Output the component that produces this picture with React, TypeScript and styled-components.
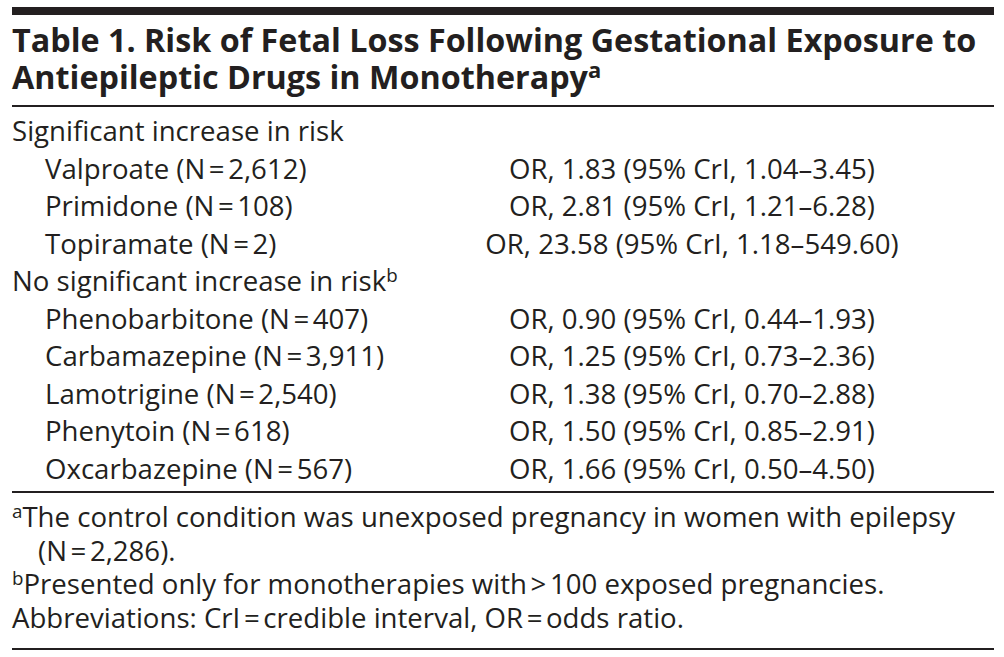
import React from "react";
import styled, { createGlobalStyle } from "styled-components";

const Global = createGlobalStyle`
  html, body { margin: 0; padding: 0; background: #ffffff; }
  body { font-family: "Open Sans", "Noto Sans", sans-serif; color: #231f20; }
`;

const Page = styled.div`
  width: 982px;
  padding: 7px 10px 0 12px;
`;

const Rule = styled.div<{ $h: number }>`
  height: ${(p) => p.$h}px;
  background: #231f20;
`;

const Title = styled.h1`
  margin: 0;
  padding: 5.5px 0 9.5px;
  font-family: "Open Sans", sans-serif;
  font-weight: 700;
  font-size: 32.3px;
  line-height: 37.5px;
  color: #231f20;
`;

const Sup = styled.sup`
  font-size: 0.68em;
  line-height: 0;
  vertical-align: 0.5em;
  font-weight: inherit;
`;

const Body = styled.div`
  display: grid;
  grid-template-columns: 382px 1fr;
  padding: 5.3px 0 3.7px;
  font-size: 27.6px;
  line-height: 37.5px;
`;

const Label = styled.div<{ $indent?: boolean }>`
  padding-left: ${(p) => (p.$indent ? 33 : 0)}px;
  white-space: nowrap;
`;

const Value = styled.div`
  text-align: center;
  white-space: nowrap;
  padding-right: 4px;
`;

const Notes = styled.div`
  padding: 7px 0 14px;
  font-size: 27.6px;
  line-height: 33.6px;
`;

const Note = styled.p<{ $hang?: boolean }>`
  margin: 0;
  padding-left: ${(p) => (p.$hang ? 26 : 0)}px;
  text-indent: ${(p) => (p.$hang ? -26 : 0)}px;
`;

const T = "\u202F";

type Row =
  | { kind: "head"; label: string; sup?: string }
  | { kind: "drug"; label: string; value: string };

const rows: Row[] = [
  { kind: "head", label: "Significant increase in risk" },
  { kind: "drug", label: `Valproate (N${T}=${T}2,612)`, value: "OR, 1.83 (95% CrI, 1.04–3.45)" },
  { kind: "drug", label: `Primidone (N${T}=${T}108)`, value: "OR, 2.81 (95% CrI, 1.21–6.28)" },
  { kind: "drug", label: `Topiramate (N${T}=${T}2)`, value: "OR, 23.58 (95% CrI, 1.18–549.60)" },
  { kind: "head", label: "No significant increase in risk", sup: "b" },
  { kind: "drug", label: `Phenobarbitone (N${T}=${T}407)`, value: "OR, 0.90 (95% CrI, 0.44–1.93)" },
  { kind: "drug", label: `Carbamazepine (N${T}=${T}3,911)`, value: "OR, 1.25 (95% CrI, 0.73–2.36)" },
  { kind: "drug", label: `Lamotrigine (N${T}=${T}2,540)`, value: "OR, 1.38 (95% CrI, 0.70–2.88)" },
  { kind: "drug", label: `Phenytoin (N${T}=${T}618)`, value: "OR, 1.50 (95% CrI, 0.85–2.91)" },
  { kind: "drug", label: `Oxcarbazepine (N${T}=${T}567)`, value: "OR, 1.66 (95% CrI, 0.50–4.50)" },
];

export default function App() {
  return (
    <>
      <Global />
      <Page>
        <Rule $h={8} />
        <Title>
          Table 1. Risk of Fetal Loss Following Gestational Exposure to Antiepileptic Drugs in
          Monotherapy<Sup>a</Sup>
        </Title>
        <Rule $h={2} />
        <Body>
          {rows.map((r, i) =>
            r.kind === "head" ? (
              <React.Fragment key={i}>
                <Label>
                  {r.label}
                  {r.sup && <Sup>{r.sup}</Sup>}
                </Label>
                <Value />
              </React.Fragment>
            ) : (
              <React.Fragment key={i}>
                <Label $indent>{r.label}</Label>
                <Value>{r.value}</Value>
              </React.Fragment>
            )
          )}
        </Body>
        <Rule $h={2} />
        <Notes>
          <Note $hang>
            <Sup>a</Sup>The control condition was unexposed pregnancy in women with epilepsy (N{T}={T}2,286).
          </Note>
          <Note>
            <Sup>b</Sup>Presented only for monotherapies with{T}&gt;{T}100 exposed pregnancies.
          </Note>
          <Note>Abbreviations: CrI{T}={T}credible interval, OR{T}={T}odds ratio.</Note>
        </Notes>
        <Rule $h={2} />
      </Page>
    </>
  );
}
